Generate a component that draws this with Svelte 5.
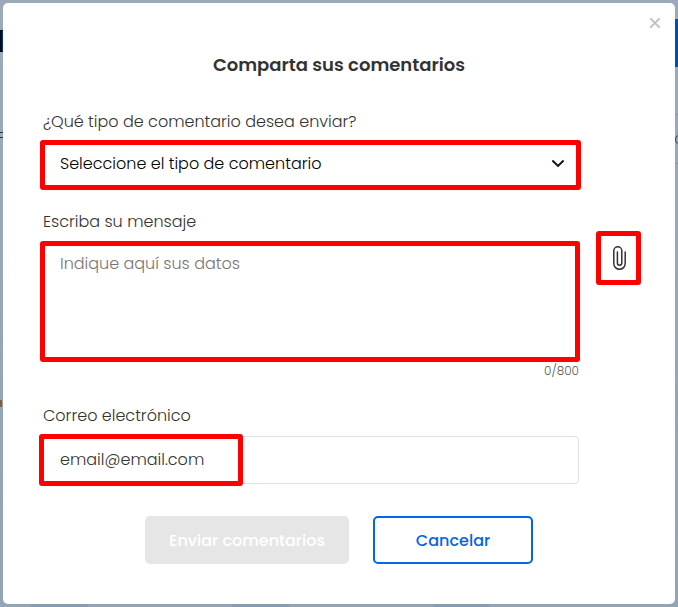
<script lang="ts">
  const MAX_LENGTH = 800;

  let message = $state("");
  let email = $state("email@email.com");
</script>

<div class="page">
  <!-- Page behind the dialog -->
  <div class="backdrop" aria-hidden="true">
    <span class="bit logo"></span>
    <span class="bit logo-edge"></span>
    <span class="bit nav"></span>
    <span class="bit rule rule-top"></span>
    <span class="bit rule rule-bottom"></span>
    <span class="bit letter"></span>
    <span class="bit dash dash-top"></span>
    <span class="bit dash dash-bottom"></span>
    <span class="bit accent"></span>
    <span class="bit shade shade-a"></span>
    <span class="bit shade shade-b"></span>
    <span class="bit shade shade-c"></span>
  </div>

  <div class="modal" role="dialog" aria-modal="true" aria-labelledby="title">
    <button class="close" aria-label="Cerrar">
      <svg width="12" height="12" viewBox="0 0 12 12">
        <path d="M1.3 1.3 10.7 10.7M10.7 1.3 1.3 10.7" />
      </svg>
    </button>

    <h1 id="title">Comparta sus comentarios</h1>

    <div class="field type">
      <label class="label" for="type">¿Qué tipo de comentario desea enviar?</label>
      <button class="select marked" id="type">
        <span class="select-text">Seleccione el tipo de comentario</span>
        <svg width="14" height="9" viewBox="0 0 14 9">
          <path d="M1.4 1.5 7 7 12.6 1.5" />
        </svg>
      </button>
    </div>

    <div class="field message">
      <label class="label" for="message">Escriba su mensaje</label>
      <div class="message-row">
        <div class="area marked">
          <textarea
            id="message"
            bind:value={message}
            maxlength={MAX_LENGTH}
            placeholder="Indique aquí sus datos"
          ></textarea>
        </div>
        <button class="attach marked" aria-label="Adjuntar archivo">
          <svg width="13" height="24" viewBox="0 0 13 24">
            <path
              d="M12.2 6V17.6a5.7 5.7 0 0 1-11.4 0V4.8a4 4 0 0 1 8 0V17a2.2 2.2 0 0 1-4.4 0V6"
            />
          </svg>
        </button>
      </div>
      <div class="counter">{message.length}/{MAX_LENGTH}</div>
    </div>

    <div class="field email">
      <label class="label" for="email">Correo electrónico</label>
      <div class="email-box marked">
        <input id="email" type="text" bind:value={email} />
      </div>
    </div>

    <div class="actions">
      <button class="send" disabled>Enviar comentarios</button>
      <button class="cancel">Cancelar</button>
    </div>
  </div>
</div>

<style>
  :global(body) {
    background: #98a8ba;
    overflow: hidden;
  }

  .page {
    position: relative;
    box-sizing: border-box;
    width: 678px;
    height: 607px;
    padding: 3px;
    overflow: hidden;
    font-family: Poppins, Inter, sans-serif;
    background: linear-gradient(#9ba9bb, #91a5b5);
  }

  button,
  input,
  textarea {
    font: inherit;
    margin: 0;
    padding: 0;
    border: none;
    outline: none;
    background: transparent;
  }

  svg {
    display: block;
    fill: none;
  }

  .bit {
    position: absolute;
  }

  .logo {
    left: 0;
    top: 30px;
    width: 3px;
    height: 22px;
    background: #020a1c;
  }

  .logo-edge {
    left: 2px;
    top: 31px;
    width: 1px;
    height: 20px;
    background: #00397c;
  }

  .nav {
    right: 0;
    top: 19px;
    width: 3px;
    height: 48px;
    background: #0050b3;
  }

  .rule {
    right: 0;
    width: 3px;
    height: 1px;
    background: #8494a8;
  }

  .rule-top {
    top: 114px;
  }

  .rule-bottom {
    top: 163px;
  }

  .letter {
    left: 675px;
    top: 135px;
    box-sizing: border-box;
    width: 8px;
    height: 9px;
    border: 1px solid #33435a;
    border-radius: 4px;
  }

  .dash {
    left: 0;
    width: 3px;
    height: 1px;
    background: #26374b;
  }

  .dash-top {
    top: 132px;
  }

  .dash-bottom {
    top: 137px;
  }

  .accent {
    left: 0;
    top: 400px;
    width: 2px;
    height: 7px;
    background: #80603f;
  }

  .shade {
    top: 604px;
    height: 3px;
    background: #879caf;
  }

  .shade-a {
    left: 31px;
    width: 57px;
  }

  .shade-b {
    left: 232px;
    width: 57px;
  }

  .shade-c {
    left: 433px;
    width: 56px;
  }

  .modal {
    position: relative;
    box-sizing: border-box;
    width: 672px;
    height: 601px;
    padding: 48px 40px 0;
    border-radius: 5px;
    background: #fff;
  }

  .close {
    position: absolute;
    top: 14px;
    right: 14px;
  }

  .close svg {
    stroke: #b8bfc9;
    stroke-width: 1.8;
  }

  h1 {
    margin: 0;
    font-size: 18px;
    font-weight: 600;
    line-height: 28px;
    text-align: center;
    color: #333;
  }

  .field {
    width: 536px;
    font-size: 16px;
    font-weight: 300;
  }

  .label {
    display: block;
    line-height: 24px;
    color: #333;
  }

  /* Red frame round a highlighted control */
  .marked {
    position: relative;
  }

  .marked::after {
    content: "";
    position: absolute;
    border: 5px solid #f00;
    border-radius: 3px;
    pointer-events: none;
  }

  .type {
    margin-top: 31px;
  }

  .select {
    display: flex;
    align-items: center;
    justify-content: space-between;
    box-sizing: border-box;
    width: 100%;
    height: 48px;
    margin-top: 7px;
    padding: 0 14px 4px 17px;
    color: #000;
  }

  .select::after {
    inset: -1px -2px -1px -3px;
  }

  .select svg {
    stroke: #111;
    stroke-width: 1.9;
  }

  .message {
    margin-top: 21px;
  }

  .message-row {
    display: flex;
    gap: 19px;
    margin-top: 8px;
  }

  .area {
    flex: none;
    width: 536px;
    height: 119px;
  }

  .area::after {
    inset: -1px -1px -1px -3px;
  }

  textarea {
    display: block;
    box-sizing: border-box;
    width: 100%;
    height: 100%;
    padding: 10px 17px;
    line-height: 24px;
    resize: none;
  }

  textarea::placeholder {
    color: #757575;
    opacity: 1;
  }

  .attach {
    display: flex;
    align-items: center;
    justify-content: center;
    box-sizing: border-box;
    flex: none;
    width: 41px;
    height: 50px;
    margin-top: -9px;
    padding-left: 2px;
  }

  .attach::after {
    inset: -2px;
  }

  .attach svg {
    stroke: #333;
    stroke-width: 1.5;
    stroke-linecap: round;
  }

  .counter {
    margin-top: 1px;
    font-size: 12px;
    line-height: 18px;
    text-align: right;
    color: #555;
  }

  .email {
    margin-top: 24px;
  }

  .email-box {
    height: 48px;
    margin-top: 8px;
  }

  .email-box::after {
    left: -4px;
    top: -2px;
    width: 194px;
    height: 42px;
  }

  input {
    box-sizing: border-box;
    width: 100%;
    height: 48px;
    padding: 0 16px 2px;
    border: 1px solid #e0e0e5;
    border-radius: 4px;
    color: #333;
  }

  .actions {
    display: flex;
    gap: 24px;
    margin-top: 32px;
    padding-left: 102px;
    font-size: 16px;
    font-weight: 500;
  }

  .actions button {
    box-sizing: border-box;
    height: 48px;
    border-radius: 5px;
  }

  .send {
    width: 204px;
    background: #e6e6e6;
    color: #fff;
  }

  .actions .cancel {
    width: 160px;
    border: 2px solid #0067e0;
    color: #0067e0;
  }
</style>
